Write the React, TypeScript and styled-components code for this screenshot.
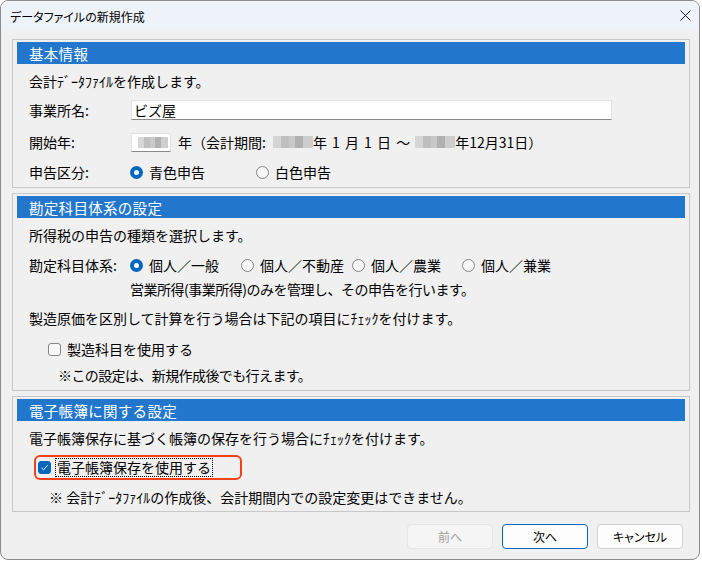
import React from 'react';
import styled, { createGlobalStyle } from 'styled-components';

const Global = createGlobalStyle`
  html, body { margin: 0; padding: 0; background: #ffffff; }
  body { font-family: "Noto Sans CJK JP", "Noto Sans", sans-serif; }
  * { box-sizing: border-box; }
`;

const Window = styled.div`
  width: 700px;
  height: 560px;
  border: 1px solid #8c8c8c;
  border-radius: 8px;
  overflow: hidden;
  background: #f0f0f0;
  display: flex;
  flex-direction: column;
  font-family: "Noto Sans CJK JP", sans-serif;
  color: #000;
`;

const TitleBar = styled.div`
  height: 30px;
  flex: none;
  background: #eef2f9;
  display: flex;
  align-items: center;
  justify-content: space-between;
  padding: 0 8px 0 9px;
  font-size: 12px;
  font-feature-settings: "palt";
`;

const CloseButton = styled.div`
  width: 12px;
  height: 12px;
  display: flex;
  align-items: center;
  justify-content: center;
  margin-top: -1px;
`;

const Body = styled.div`
  flex: 1;
  display: flex;
  flex-direction: column;
  padding: 8px 9px 0 11px;
`;

const Group = styled.section<{ $mt?: number; $pb: number }>`
  border: 1px solid #c8c8c8;
  margin-top: ${(p) => p.$mt ?? 0}px;
  padding-bottom: ${(p) => p.$pb}px;
  display: flex;
  flex-direction: column;
`;

const Header = styled.div`
  margin: 2px 4px 0 4px;
  height: 22px;
  background: #2277cc;
  color: #ffffff;
  font-size: 14.5px;
  letter-spacing: 0.3px;
  display: flex;
  align-items: center;
  padding-left: 12px;
`;

const Row = styled.div<{ $mt: number; $pl?: number; $ls?: number }>`
  height: 24px;
  margin-top: ${(p) => p.$mt}px;
  padding-left: ${(p) => p.$pl ?? 16}px;
  display: flex;
  align-items: center;
  font-size: 14px;
  letter-spacing: ${(p) => p.$ls ?? 0}px;
  white-space: pre;
`;

const Label = styled.div<{ $w: number }>`
  width: ${(p) => p.$w}px;
  flex: none;
`;

const TextInput = styled.div<{ $w: number; $h: number }>`
  width: ${(p) => p.$w}px;
  height: ${(p) => p.$h}px;
  background: #ffffff;
  border: 1px solid #e3e3e3;
  border-bottom: 1px solid #8a8a8a;
  display: flex;
  align-items: center;
  padding-left: 2px;
  font-size: 14px;
`;

const Mosaic = styled.span<{ $w: number; $ml?: number }>`
  display: inline-block;
  width: ${(p) => p.$w}px;
  height: 12px;
  margin-left: ${(p) => p.$ml ?? 0}px;
  flex: none;
  background: linear-gradient(
    90deg,
    #d2d2d2 0 20%,
    #b9b9b9 20% 40%,
    #c4c4c4 40% 55%,
    #a9a9a9 55% 75%,
    #c9c9c9 75% 100%
  );
  opacity: 0.9;
`;

const InputMosaic = styled(Mosaic)`
  margin-left: 4px;
  height: 11px;
`;

const Spaced = styled.span`
  word-spacing: 2px;
`;

const Option = styled.div<{ $w?: number }>`
  width: ${(p) => (p.$w ? `${p.$w}px` : 'auto')};
  flex: none;
  display: flex;
  align-items: center;
  gap: 6px;
`;

const RadioOn = styled.span`
  width: 13px;
  height: 13px;
  border-radius: 50%;
  background: #0067c0;
  display: flex;
  align-items: center;
  justify-content: center;
  &::after {
    content: '';
    width: 5px;
    height: 5px;
    border-radius: 50%;
    background: #ffffff;
  }
`;

const RadioOff = styled.span`
  width: 13px;
  height: 13px;
  border-radius: 50%;
  border: 1px solid #858585;
  background: #f6f6f6;
`;

const Check = styled.span<{ $on?: boolean }>`
  width: 13px;
  height: 13px;
  flex: none;
  border-radius: 3px;
  border: 1px solid ${(p) => (p.$on ? '#0067c0' : '#858585')};
  background: ${(p) => (p.$on ? '#0067c0' : '#f8f8f8')};
  display: flex;
  align-items: center;
  justify-content: center;
`;

const CheckLabel = styled.span<{ $focus?: boolean }>`
  margin-left: 5px;
  outline: ${(p) => (p.$focus ? '1px dotted #000' : 'none')};
  outline-offset: 0px;
  line-height: 17px;
  padding: 0 1px;
`;

const Highlight = styled.div`
  display: flex;
  align-items: center;
  width: 208px;
  height: 25px;
  border: 2px solid #f2401b;
  border-radius: 6px;
  padding-left: 2px;
  margin-top: -3px;
`;

const Footer = styled.div`
  display: flex;
  justify-content: flex-end;
  gap: 9px;
  padding: 12px 7px 0 0;
`;

const Button = styled.div<{ $variant: 'disabled' | 'default' | 'normal' }>`
  width: 86px;
  height: 25px;
  border-radius: 4px;
  display: flex;
  align-items: center;
  justify-content: center;
  font-size: 12px;
  font-feature-settings: "palt";
  background: ${(p) => (p.$variant === 'disabled' ? '#f5f5f5' : '#fdfdfd')};
  border: 1px solid
    ${(p) =>
      p.$variant === 'disabled' ? '#e6e6e6' : p.$variant === 'default' ? '#0067c0' : '#d0d0d0'};
  color: ${(p) => (p.$variant === 'disabled' ? '#9d9d9d' : '#000')};
`;

export default function App() {
  return (
    <>
      <Global />
      <Window>
        <TitleBar>
          <span>データファイルの新規作成</span>
          <CloseButton>
            <svg width="11" height="11" viewBox="0 0 11 11">
              <path d="M0.5 0.5 L10.5 10.5 M10.5 0.5 L0.5 10.5" stroke="#1b1b1b" strokeWidth="1" />
            </svg>
          </CloseButton>
        </TitleBar>
        <Body>
          <Group $pb={3}>
            <Header>基本情報</Header>
            <Row $mt={5}>会計ﾃﾞｰﾀﾌｧｲﾙを作成します。</Row>
            <Row $mt={5}>
              <Label $w={102}>事業所名:</Label>
              <TextInput $w={481} $h={20}>ビズ屋</TextInput>
            </Row>
            <Row $mt={8}>
              <Label $w={102}>開始年:</Label>
              <TextInput $w={40} $h={19}>
                <InputMosaic $w={30} />
              </TextInput>
              <span style={{ marginLeft: 7 }}>年（会計期間:</span>
              <Mosaic $w={40} $ml={7} />
              <Spaced>年 1 月 1 日 ～ </Spaced>
              <Mosaic $w={40} />
              <span>年12月31日）</span>
            </Row>
            <Row $mt={6}>
              <Label $w={101}>申告区分:</Label>
              <Option $w={126}>
                <RadioOn />
                <span>青色申告</span>
              </Option>
              <Option>
                <RadioOff />
                <span>白色申告</span>
              </Option>
            </Row>
          </Group>

          <Group $mt={5} $pb={3}>
            <Header>勘定科目体系の設定</Header>
            <Row $mt={5}>所得税の申告の種類を選択します。</Row>
            <Row $mt={6}>
              <Label $w={101}>勘定科目体系:</Label>
              <Option $w={111}>
                <RadioOn />
                <span>個人／一般</span>
              </Option>
              <Option $w={111}>
                <RadioOff />
                <span>個人／不動産</span>
              </Option>
              <Option $w={110}>
                <RadioOff />
                <span>個人／農業</span>
              </Option>
              <Option>
                <RadioOff />
                <span>個人／兼業</span>
              </Option>
            </Row>
            <Row $mt={0} $pl={117} $ls={-0.5}>営業所得(事業所得)のみを管理し、その申告を行います。</Row>
            <Row $mt={5}>製造原価を区別して計算を行う場合は下記の項目にﾁｪｯｸを付けます。</Row>
            <Row $mt={7} $pl={35}>
              <Check />
              <CheckLabel>製造科目を使用する</CheckLabel>
            </Row>
            <Row $mt={2} $pl={45} $ls={-0.6}>※この設定は、新規作成後でも行えます。</Row>
          </Group>

          <Group $mt={5} $pb={2}>
            <Header>電子帳簿に関する設定</Header>
            <Row $mt={5}>電子帳簿保存に基づく帳簿の保存を行う場合にﾁｪｯｸを付けます。</Row>
            <Row $mt={7} $pl={21}>
              <Highlight>
                <Check $on>
                  <svg width="9" height="9" viewBox="0 0 9 9">
                    <path d="M1.5 4.8 L3.6 6.8 L7.6 2.2" fill="none" stroke="#ffffff" strokeWidth="1" />
                  </svg>
                </Check>
                <CheckLabel $focus>電子帳簿保存を使用する</CheckLabel>
              </Highlight>
            </Row>
            <Row $mt={4} $pl={36}>※ 会計ﾃﾞｰﾀﾌｧｲﾙの作成後、会計期間内での設定変更はできません。</Row>
          </Group>

          <Footer>
            <Button $variant="disabled">前へ</Button>
            <Button $variant="default">次へ</Button>
            <Button $variant="normal">キャンセル</Button>
          </Footer>
        </Body>
      </Window>
    </>
  );
}
